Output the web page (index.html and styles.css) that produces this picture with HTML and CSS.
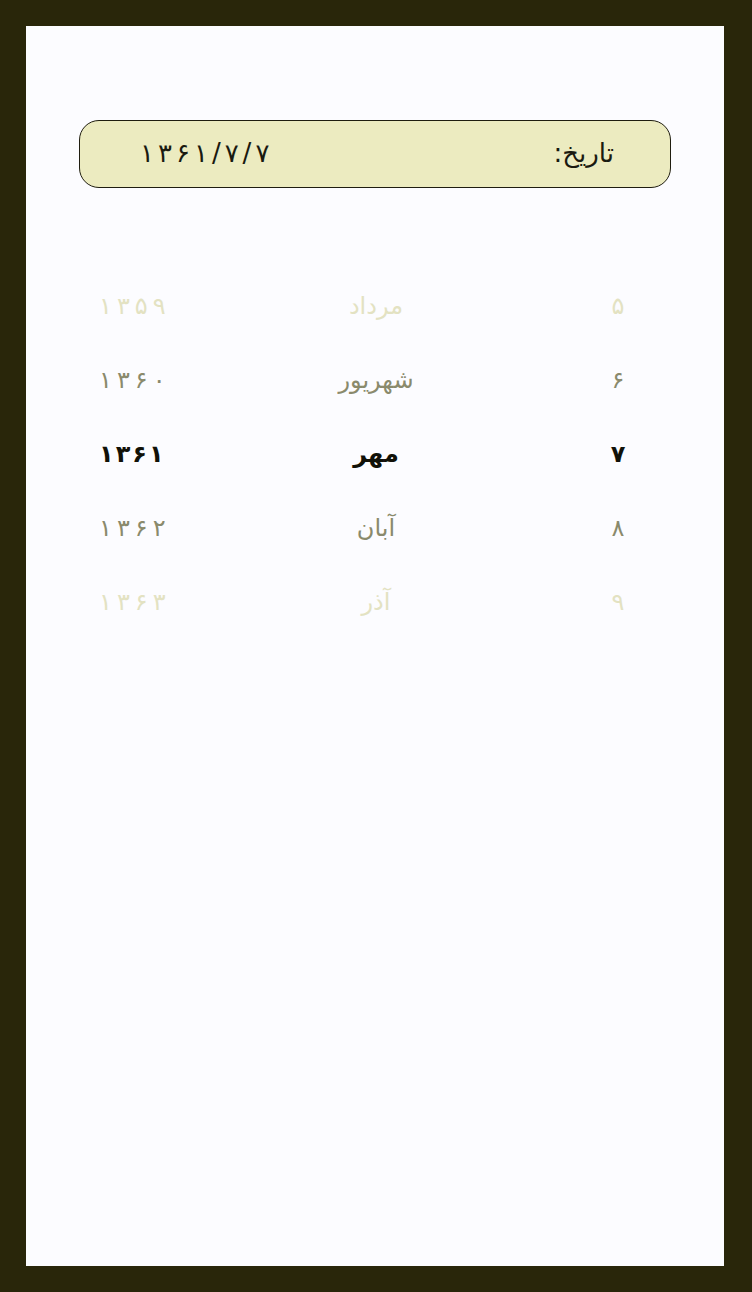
FILE: index.html
```html
<!DOCTYPE html>
<html lang="fa" dir="rtl">
<head>
<meta charset="utf-8">
<link rel="stylesheet" href="styles.css">
</head>
<body>
<div class="frame">
  <div class="screen">
    <div class="date-pill">
      <span class="label">تاریخ:</span>
      <span class="num value"><i>۱</i><i>۳</i><i>۶</i><i>۱</i><i>/</i><i>۷</i><i>/</i><i>۷</i></span>
    </div>
    <div class="picker">
      <div class="row far"><span class="day">۵</span><span class="month">مرداد</span><span class="year"><span class="num"><i>۱</i><i>۳</i><i>۵</i><i>۹</i></span></span></div>
      <div class="row near"><span class="day">۶</span><span class="month">شهریور</span><span class="year"><span class="num"><i>۱</i><i>۳</i><i>۶</i><i>۰</i></span></span></div>
      <div class="row selected"><span class="day">۷</span><span class="month">مهر</span><span class="year"><span class="num"><i>۱</i><i>۳</i><i>۶</i><i>۱</i></span></span></div>
      <div class="row near"><span class="day">۸</span><span class="month">آبان</span><span class="year"><span class="num"><i>۱</i><i>۳</i><i>۶</i><i>۲</i></span></span></div>
      <div class="row far"><span class="day">۹</span><span class="month">آذر</span><span class="year"><span class="num"><i>۱</i><i>۳</i><i>۶</i><i>۳</i></span></span></div>
    </div>
  </div>
</div>
</body>
</html>
```
FILE: styles.css
```css
html, body {
  margin: 0;
  padding: 0;
}
body {
  font-family: "DejaVu Sans", "Noto Sans", sans-serif;
  background: #29260a;
}
.frame {
  width: 752px;
  height: 1292px;
  box-sizing: border-box;
  padding: 26px 28px 26px 26px;
  background: #29260a;
}
.screen {
  width: 698px;
  height: 1240px;
  background: #fcfcff;
  box-sizing: border-box;
  padding: 94px 53px 0 53px;
}
.num {
  display: inline-flex;
  direction: ltr;
  gap: 5px;
}
.num i {
  font-style: normal;
}
.date-pill {
  height: 68px;
  box-sizing: border-box;
  border: 1.5px solid #1f1d10;
  border-radius: 20px;
  background: #ecebc0;
  display: flex;
  align-items: center;
  justify-content: space-between;
  padding: 0 56px 2px 60px;
  font-size: 26px;
  color: #1a1a10;
}
.date-pill .value {
  gap: 4px;
}
.picker {
  margin-top: 81px;
  display: flex;
  flex-direction: column;
}
.row {
  display: grid;
  grid-template-columns: 120px 1fr 120px;
  height: 74px;
  align-items: center;
  font-size: 24px;
}
.row .day {
  text-align: center;
  padding-left: 14px;
}
.row .month {
  text-align: center;
  padding-left: 2px;
}
.row .year {
  text-align: left;
  padding-left: 20px;
}
.far { color: #e3e2c2; }
.near { color: #8a8a6c; }
.selected { color: #111108; font-weight: bold; }
.selected .num { gap: 2px; }
```
